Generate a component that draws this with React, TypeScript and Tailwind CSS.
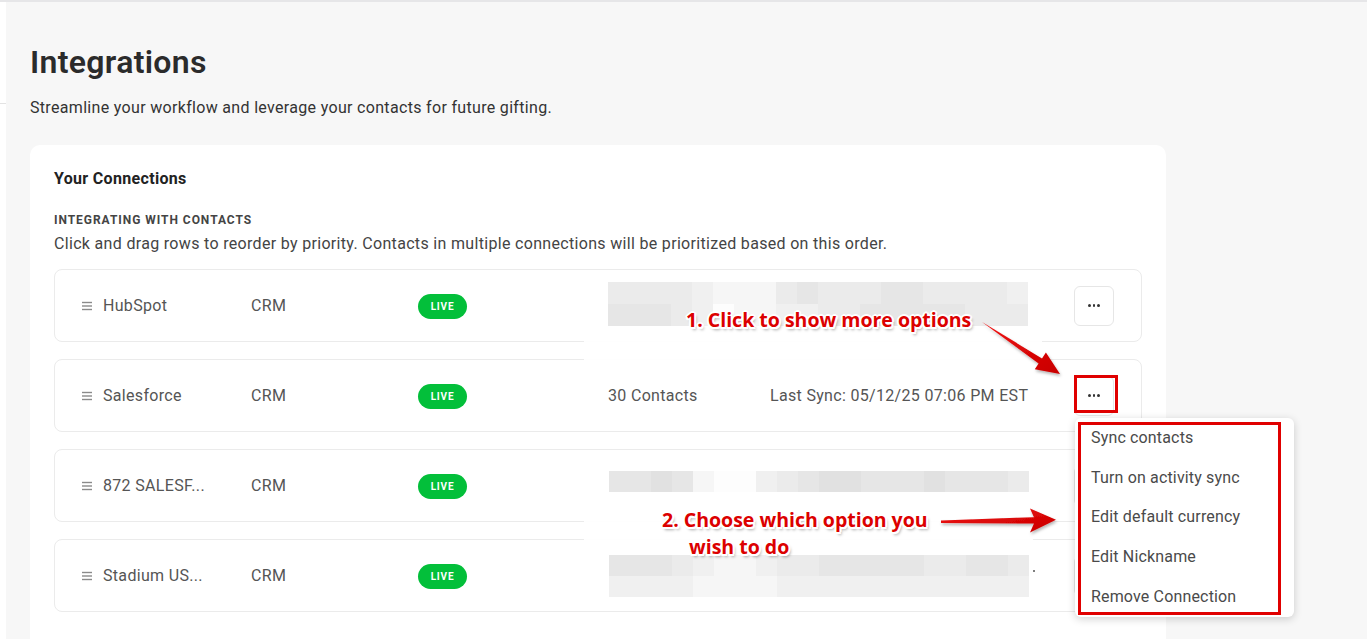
import React from "react"

const SHADES = [
  "bg-[#fdfdfd]",
  "bg-[#f6f6f6]",
  "bg-[#f0f0f0]",
  "bg-[#ebebeb]",
  "bg-[#e6e6e6]",
  "bg-[#e1e1e1]",
]

type Row = {
  name: string
  contacts?: string
  sync?: string
}

const rows: Row[] = [
  { name: "HubSpot" },
  { name: "Salesforce", contacts: "30 Contacts", sync: "Last Sync: 05/12/25 07:06 PM EST" },
  { name: "872 SALESF..." },
  { name: "Stadium US..." },
]

const menuItems = ["Sync contacts", "Turn on activity sync", "Edit default currency", "Edit Nickname", "Remove Connection"]

function DragIcon() {
  return (
    <svg width="10" height="10" viewBox="0 0 10 10" className="shrink-0">
      <rect x="0" y="0.8" width="10" height="1.4" fill="#8a8a8a" />
      <rect x="0" y="4.3" width="10" height="1.4" fill="#8a8a8a" />
      <rect x="0" y="7.8" width="10" height="1.4" fill="#8a8a8a" />
    </svg>
  )
}

function LiveBadge() {
  return (
    <span className="inline-flex h-[25px] w-[49px] items-center justify-center rounded-full bg-[#03bf3a] text-[10px] font-bold tracking-[0.08em] text-white">
      LIVE
    </span>
  )
}

function MoreButton() {
  return (
    <button className="flex h-10 w-10 shrink-0 items-center justify-center gap-[2px] rounded-md border border-[#e6e6e6] bg-white">
      <span className="h-[2.5px] w-[2.5px] rounded-full bg-[#333]" />
      <span className="h-[2.5px] w-[2.5px] rounded-full bg-[#333]" />
      <span className="h-[2.5px] w-[2.5px] rounded-full bg-[#333]" />
    </button>
  )
}

function ConnectionRow({ row }: { row: Row }) {
  return (
    <div className="flex h-[73px] items-center rounded-lg border border-[#ebebeb] bg-white pl-[27px] pr-[27px] text-[16px] text-[#555]">
      <DragIcon />
      <div className="ml-[11px] w-[148px]">{row.name}</div>
      <div className="w-[167px]">CRM</div>
      <div className="w-[190px]">
        <LiveBadge />
      </div>
      <div className="w-[162px]">{row.contacts}</div>
      <div className="flex-1">{row.sync}</div>
      <MoreButton />
    </div>
  )
}

// blurred / pixelated redaction blocks
function Mosaic({ strips, tile, className }: { strips: string[]; tile: string; className: string }) {
  return (
    <div className={`absolute flex flex-col ${className}`}>
      {strips.map((s, i) => (
        <div key={i} className="flex">
          {s.split("").map((c, j) => (
            <div key={j} className={`w-[21px] ${tile} ${SHADES[Number(c)]}`} />
          ))}
        </div>
      ))}
    </div>
  )
}

const calloutText =
  "[text-shadow:-2px_0_0_#fff,2px_0_0_#fff,0_-2px_0_#fff,0_2px_0_#fff,-1.5px_-1.5px_0_#fff,1.5px_1.5px_0_#fff,-1.5px_1.5px_0_#fff,1.5px_-1.5px_0_#fff,2px_3px_3px_rgba(0,0,0,0.35)]"

export default function App() {
  return (
    <div className="relative flex h-[639px] w-full overflow-hidden border-t-2 border-[#e6e6e8] bg-[#f7f7f7] tracking-[0.02em] [font-family:Roboto,'Liberation_Sans',sans-serif]">
      {/* sidebar sliver */}
      <div className="w-[6px] shrink-0 bg-white">
        <div className="h-[102px] border-b border-[#e3e3e3]" />
      </div>

      <main className="flex-1 pl-[24px] pt-[41px]">
        <h1 className="text-[32px] font-semibold leading-[38px] text-[#2b2b2b]">Integrations</h1>
        <p className="mt-[15px] text-[16px] leading-[24px] text-[#333]">
          Streamline your workflow and leverage your contacts for future gifting.
        </p>

        <section className="mt-[25px] w-[1136px] rounded-[10px] bg-white px-[24px] pb-[40px] pt-[24px]">
          <h2 className="text-[16px] font-bold leading-[20px] text-[#222]">Your Connections</h2>
          <h3 className="mt-[23px] text-[12px] font-bold leading-[16px] tracking-[0.08em] text-[#444]">
            INTEGRATING WITH CONTACTS
          </h3>
          <p className="mt-[6px] text-[16px] leading-[20px] text-[#444]">
            Click and drag rows to reorder by priority. Contacts in multiple connections will be prioritized based on this order.
          </p>
          <div className="mt-[15px] flex flex-col gap-[17px]">
            {rows.map((r) => (
              <ConnectionRow key={r.name} row={r} />
            ))}
          </div>
        </section>
      </main>

      {/* redactions */}
      <Mosaic
        className="left-[608px] top-[280px]"
        tile="h-[22px]"
        strips={["33332111343334433332", "44432011223344444333"]}
      />
      <div className="absolute left-[584px] top-[324px] h-[45px] w-[458px] bg-white/95" />
      <div className="absolute left-[584px] top-[451px] h-[150px] w-[449px] bg-white/95" />
      <Mosaic className="left-[609px] top-[469px]" tile="h-[21px]" strips={["44541002345544454443"]} />
      <Mosaic
        className="left-[609px] top-[553px]"
        tile="h-[21px]"
        strips={["44432112334444433443", "22221111222222222222"]}
      />
      <div className="absolute left-[1033px] top-[568px] h-[2px] w-[2px] rounded-full bg-[#555]" />

      {/* callout 1 */}
      <div
        className={`absolute left-[686px] top-[304px] text-[19.5px] font-bold leading-[28px] tracking-normal text-[#dc0000] [font-family:'Open_Sans',sans-serif] ${calloutText}`}
      >
        1. Click to show more options
      </div>
      <svg className="absolute left-0 top-0" width="1367" height="639" viewBox="0 0 1367 639">
        <defs>
          <linearGradient id="arrowRed" x1="0" y1="0" x2="1" y2="1">
            <stop offset="0" stopColor="#f01010" />
            <stop offset="1" stopColor="#c80000" />
          </linearGradient>
          <filter id="arrowShadow" x="-20%" y="-20%" width="140%" height="140%">
            <feDropShadow dx="1" dy="2" stdDeviation="1.5" floodColor="#000" floodOpacity="0.3" />
          </filter>
        </defs>
        <polygon
          points="982,320 1042,356.4 1045.9,350.6 1060,372 1034.8,367.2 1038.6,361.4"
          fill="url(#arrowRed)"
          filter="url(#arrowShadow)"
        />
        <polygon
          points="941,518.6 1034,515.2 1030,506.5 1056,517.8 1030,530.5 1034,521.6 941,521"
          fill="url(#arrowRed)"
          filter="url(#arrowShadow)"
        />
      </svg>

      {/* callout 2 */}
      <div
        className={`absolute left-[662px] top-[504px] text-[19.5px] font-bold leading-[27px] tracking-normal text-[#dc0000] [font-family:'Open_Sans',sans-serif] ${calloutText}`}
      >
        <div>2. Choose which option you</div>
        <div className="pl-[27px]">wish to do</div>
      </div>

      {/* highlight on button */}
      <div className="absolute left-[1074px] top-[373px] h-[38px] w-[44px] border-[3px] border-[#e00000]" />

      {/* dropdown menu */}
      <div className="absolute left-[1075px] top-[416px] h-[199px] w-[219px] rounded-md bg-white shadow-[0_2px_8px_rgba(0,0,0,0.18)]">
        {menuItems.map((m) => (
          <div key={m} className="flex h-[39.7px] items-center px-[16px] text-[16px] tracking-[0.01em] text-[#4a4a4a]">
            {m}
          </div>
        ))}
        <div className="absolute left-[3px] top-[4px] h-[193px] w-[203px] border-[3px] border-[#e00000]" />
      </div>
    </div>
  )
}
